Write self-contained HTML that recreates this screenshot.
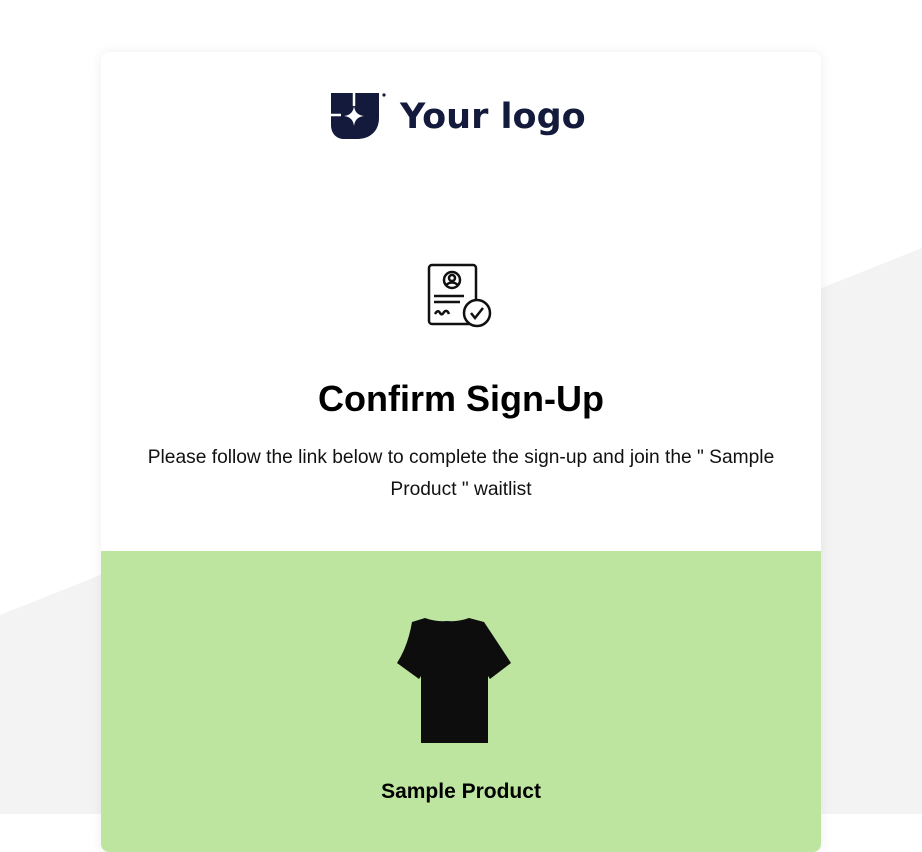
<!DOCTYPE html>
<html><head><meta charset="utf-8">
<style>
html,body{margin:0;padding:0}
body{width:922px;height:814px;overflow:hidden;position:relative;background:#fff;font-family:"Liberation Sans",Arial,sans-serif}
.bg{position:absolute;left:0;top:0}
.card{position:absolute;left:101px;top:52px;width:720px;height:800px;background:#fff;border-radius:8px;box-shadow:0 0 12px rgba(0,0,0,0.07);overflow:hidden}
h1{position:absolute;top:327px;left:0;width:720px;text-align:center;margin:0;font-size:36px;font-weight:bold;color:#000;line-height:40px}
p.msg{position:absolute;top:390px;left:30px;width:660px;text-align:center;margin:0;font-size:19.2px;line-height:32px;color:#111}
.green{position:absolute;left:0;top:499px;width:720px;height:320px;background:#bde5a0}
.pname{position:absolute;top:229px;left:0;width:720px;text-align:center;font-size:21px;font-weight:bold;color:#000}
</style></head><body>
<svg class="bg" width="922" height="814"><polygon points="922,248 0,615 0,814 922,814" fill="#f3f3f3"/></svg>
<div class="card">
  <svg style="position:absolute;left:229px;top:40px" width="60" height="50" viewBox="0 0 60 50">
    <path d="M1 1 H49 V26 C49 39 40 47 27 47 H14 C6 47 1 41 1 33 Z" fill="#131a3b"/>
    <path d="M24 1 V14 M1 23 H11" stroke="#fff" stroke-width="2.5"/>
    <path d="M24 14 Q25 23 34 24 Q25 25 24 34 Q23 25 14 24 Q23 23 24 14 Z" fill="#fff"/>
    <circle cx="54" cy="3" r="1.6" fill="#131a3b"/>
  </svg>
  <div style="position:absolute;left:299px;top:40px;font-size:35px;font-weight:bold;color:#131a3b;line-height:50px;font-family:'DejaVu Sans','Liberation Sans',sans-serif">Your logo</div>
  <svg style="position:absolute;left:326px;top:211px" width="66" height="66" viewBox="0 0 66 66" fill="none" stroke="#111" stroke-width="2.5">
    <rect x="2" y="2" width="47" height="59" rx="3"/>
    <circle cx="25" cy="17" r="8"/>
    <circle cx="25" cy="15" r="3"/>
    <path d="M19 22 Q25 17 31 22"/>
    <path d="M7 33 H37 M7 39 H33"/>
    <path d="M8 51 Q11 46 13 50 Q15 53 17 49 Q20 46 22 51"/>
    <circle cx="50" cy="50" r="13" fill="#fff"/>
    <path d="M44 50 L48 55 L56 45"/>
  </svg>
  <h1>Confirm Sign-Up</h1>
  <p class="msg">Please follow the link below to complete the sign-up and join the " Sample Product " waitlist</p>
  <div class="green">
    <svg style="position:absolute;left:295px;top:65px" width="118" height="130" viewBox="0 0 118 130">
      <path d="M29 2 Q40 6 51 5 Q62 6 73 2 L88 6 Q104 30 115 47 L94 63 L92 60 V127 H25 V60 L23 63 L1 47 Q12 30 16 6 Z" fill="#0d0d0d"/>
    </svg>
    <div class="pname">Sample Product</div>
  </div>
</div>
</body></html>
